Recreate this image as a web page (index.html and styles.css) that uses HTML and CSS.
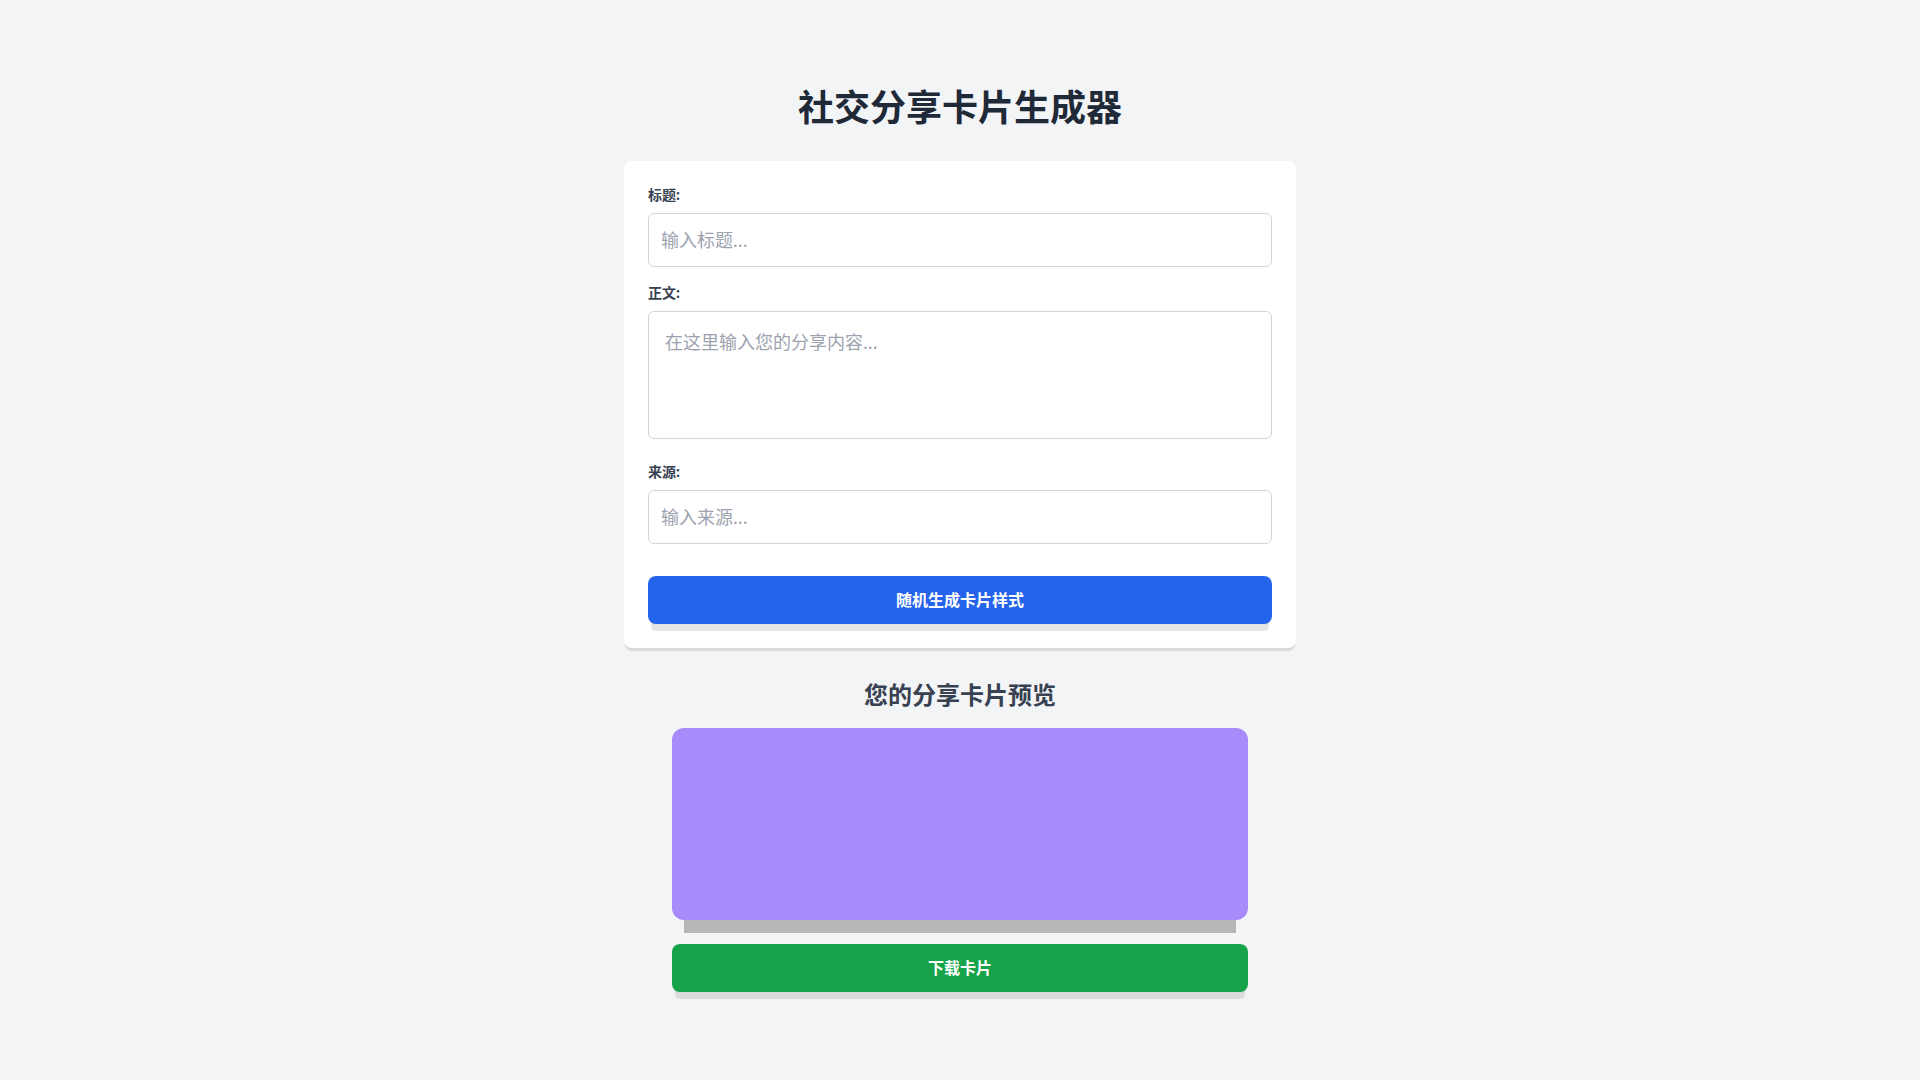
FILE: index.html
```html
<!DOCTYPE html>
<html lang="zh-CN">

<head>
    <meta charset="UTF-8">
    <meta name="viewport" content="width=device-width, initial-scale=1.0">
    <title>社交分享卡片生成器</title>
    <link rel="stylesheet" href="styles.css">
</head>

<body>
    <div class="container">
        <h1>社交分享卡片生成器</h1>

        <div class="panel">
            <div class="form-group">
                <label for="cardTitle">标题:</label>
                <input type="text" id="cardTitle" placeholder="输入标题...">
            </div>

            <div class="form-group">
                <label for="cardContent">正文:</label>
                <textarea id="cardContent" placeholder="在这里输入您的分享内容..."></textarea>
            </div>

            <div class="form-group">
                <label for="cardSource">来源:</label>
                <input type="text" id="cardSource" placeholder="输入来源...">
            </div>

            <button class="btn btn-blue" id="randomBtn">随机生成卡片样式</button>
        </div>

        <h2>您的分享卡片预览</h2>

        <div class="preview">
            <div id="cardPreview" class="card-preview"></div>
            <button class="btn btn-green" id="downloadBtn">下载卡片</button>
        </div>
    </div>
</body>

</html>
```

FILE: styles.css
```css
* {
    box-sizing: border-box;
}

body {
    margin: 0;
    padding: 84px 0 40px;
    background-color: #f3f4f6;
    font-family: "Noto Sans", "Noto Sans CJK SC", sans-serif;
    color: #1f2937;
}

.container {
    max-width: 672px;
    margin: 0 auto;
}

h1 {
    margin: 0 0 29px;
    font-size: 36px;
    line-height: 48px;
    font-weight: 700;
    text-align: center;
    color: #1f2937;
}

.panel {
    background-color: white;
    padding: 24px;
    border-radius: 8px;
    box-shadow: 0 4px 0 -1px rgba(0, 0, 0, 0.1), 0 2px 0 -2px rgba(0, 0, 0, 0.1);
    margin-bottom: 31px;
}

.form-group {
    margin-bottom: 16px;
}

.form-group:nth-child(2) {
    margin-bottom: 23px;
}

.form-group:nth-child(3) {
    margin-bottom: 32px;
}

label {
    display: block;
    margin-bottom: 8px;
    font-size: 14px;
    line-height: 20px;
    font-weight: 700;
    color: #374151;
}

input,
textarea {
    display: block;
    width: 100%;
    margin: 0;
    padding: 12px;
    border: 1px solid #d1d5db;
    border-radius: 6px;
    font-family: inherit;
    font-size: 18px;
    line-height: 28px;
    color: #1f2937;
    background: white;
}

textarea {
    height: 128px;
    padding: 16px;
    resize: none;
}

input::placeholder,
textarea::placeholder {
    color: #9ca3af;
}

.btn {
    display: block;
    width: 100%;
    padding: 12px 16px;
    border: none;
    border-radius: 8px;
    font-family: inherit;
    font-size: 16px;
    line-height: 24px;
    font-weight: 700;
    color: white;
    cursor: pointer;
    box-shadow: 0 10px 0 -3px rgba(0, 0, 0, 0.1), 0 4px 0 -4px rgba(0, 0, 0, 0.1);
}

.btn-blue {
    background-color: #2563eb;
}

.btn-green {
    background-color: #16a34a;
    margin-top: 24px;
}

h2 {
    margin: 0 0 17px;
    font-size: 24px;
    line-height: 32px;
    font-weight: 700;
    text-align: center;
    color: #374151;
}

.preview {
    max-width: 576px;
    margin: 0 auto;
}

.card-preview {
    height: 192px;
    border-radius: 12px;
    background-color: #a78bfa;
    box-shadow: 0 25px 0 -12px rgba(0, 0, 0, 0.25);
}
```
